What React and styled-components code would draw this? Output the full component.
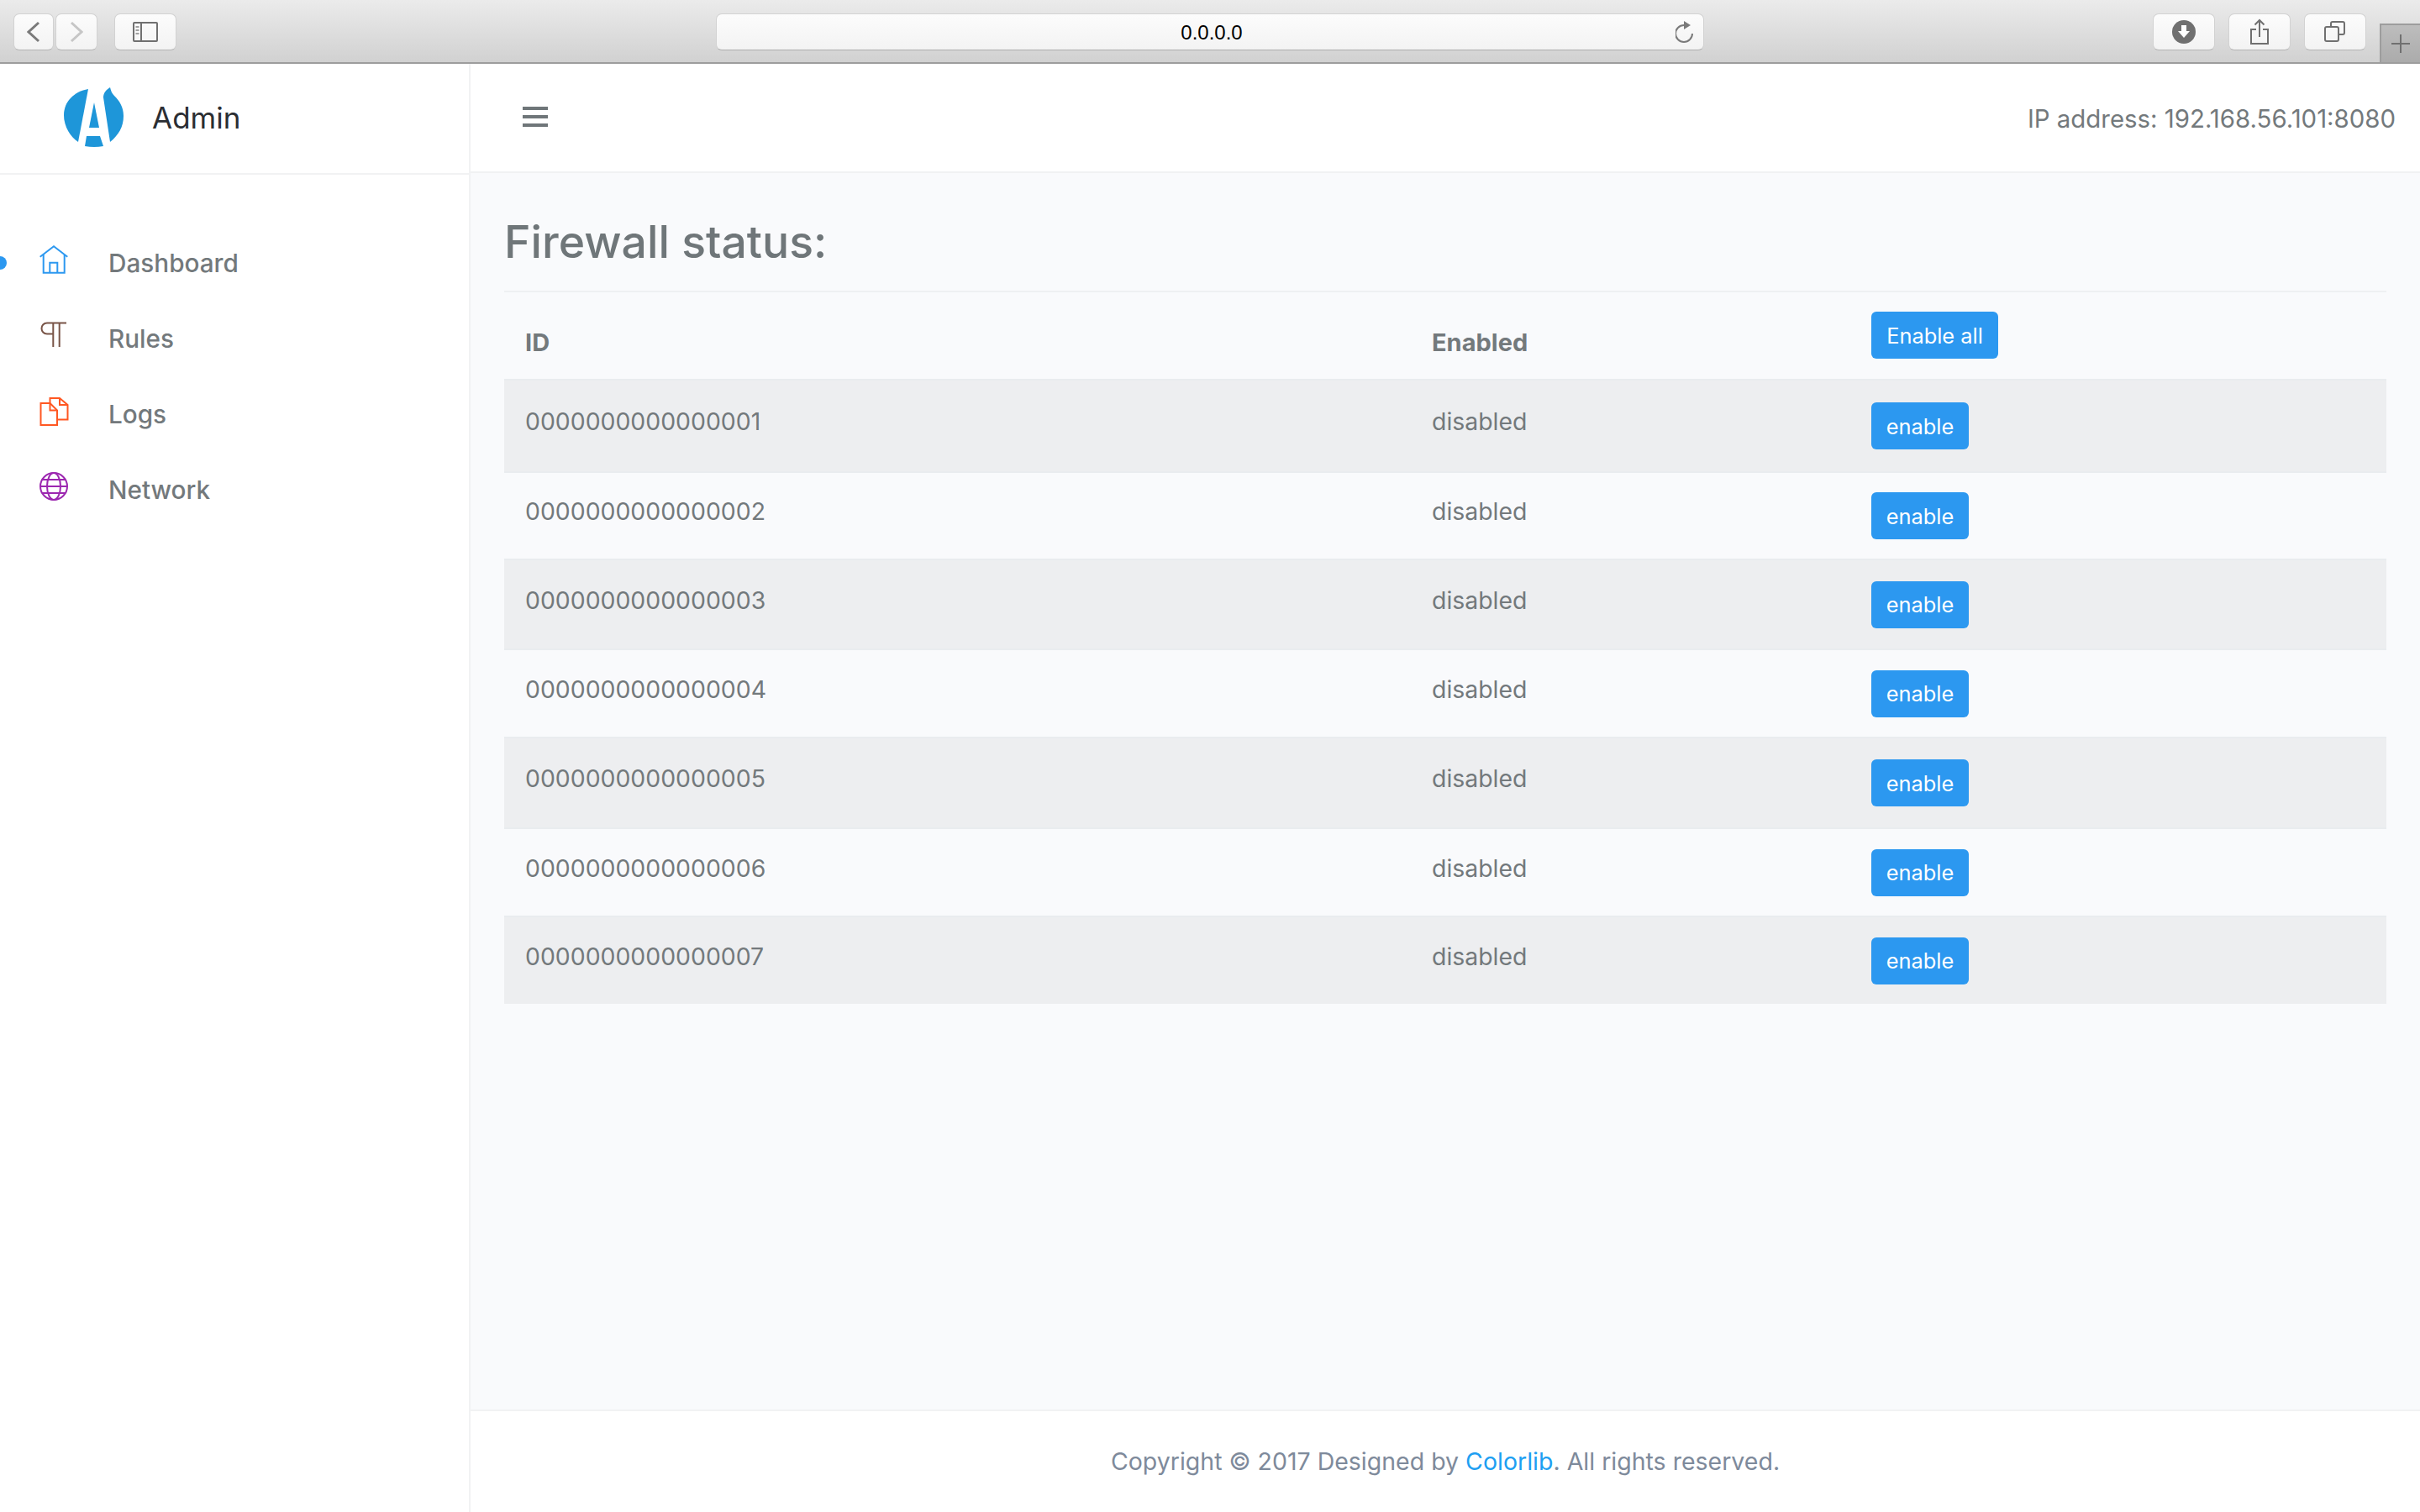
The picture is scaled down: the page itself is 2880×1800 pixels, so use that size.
import React from 'react';
import styled, { createGlobalStyle } from 'styled-components';

const GlobalStyle = createGlobalStyle`
  html, body {
    margin: 0;
    padding: 0;
    background: #fff;
  }
  * {
    box-sizing: border-box;
  }
  body {
    font-family: Inter, "Liberation Sans", sans-serif;
    color: #73797c;
  }
`;

const Page = styled.div`
  width: 2880px;
  height: 1800px;
  display: flex;
  flex-direction: column;
  overflow: hidden;
`;

const Toolbar = styled.div`
  height: 76px;
  flex: none;
  display: flex;
  align-items: flex-start;
  padding: 16px 0 0 16px;
  background: linear-gradient(#ebebeb, #d1d1d1);
  border-bottom: 2px solid #9d9d9d;
`;

const ChromeButton = styled.div`
  width: ${(p) => p.$width || 74}px;
  height: 44px;
  flex: none;
  margin-left: ${(p) => p.$left || 0}px;
  display: flex;
  align-items: center;
  justify-content: center;
  background: linear-gradient(#fcfcfc, #f3f3f3);
  border: 1px solid #d2d2d2;
  border-bottom-color: #b4b4b4;
  border-radius: 7px;
`;

const UrlBar = styled.div`
  width: 1176px;
  height: 44px;
  flex: none;
  margin-left: 642px;
  position: relative;
  display: flex;
  align-items: center;
  justify-content: center;
  background: linear-gradient(#fcfcfc, #f3f3f3);
  border: 1px solid #d2d2d2;
  border-bottom-color: #adadad;
  border-radius: 7px;
  font-family: "Liberation Sans", sans-serif;
  font-size: 24px;
  color: #000;
  padding: 2px 0 0 4px;
`;

const ReloadIcon = styled.svg`
  position: absolute;
  right: 11px;
  top: 7px;
`;

const NewTab = styled.div`
  width: 48px;
  height: 46px;
  flex: none;
  margin: 12px 0 0 16px;
  display: flex;
  align-items: center;
  justify-content: center;
  background: linear-gradient(#bdbdbd, #ababab);
  border-top: 2px solid #9d9d9d;
  border-left: 2px solid #9d9d9d;
`;

const Body = styled.div`
  flex: 1;
  display: flex;
  min-height: 0;
`;

const Sidebar = styled.aside`
  width: 560px;
  flex: none;
  background: #fff;
  border-right: 2px solid #f1f2f3;
`;

const Brand = styled.div`
  height: 132px;
  display: flex;
  align-items: center;
  gap: 33px;
  padding: 0 0 2px 76px;
  border-bottom: 2px solid #f1f2f3;
  font-size: 35px;
  color: #2b2e33;
`;

const Nav = styled.nav`
  padding-top: 60px;
`;

const NavItem = styled.div`
  height: 90px;
  position: relative;
  display: flex;
  align-items: center;
  gap: 47px;
  padding-left: 46px;
  font-size: 29.7px;
  font-weight: 500;
  color: #73797c;
`;

const ActiveDot = styled.span`
  position: absolute;
  left: -8px;
  top: 37px;
  width: 16px;
  height: 16px;
  border-radius: 50%;
  background: #2c98f0;
`;

const NavIcon = styled.svg`
  flex: none;
  margin-bottom: 9px;
`;

const Main = styled.main`
  flex: 1;
  min-width: 0;
  display: flex;
  flex-direction: column;
`;

const TopBar = styled.header`
  height: 130px;
  flex: none;
  display: flex;
  align-items: center;
  justify-content: space-between;
  padding: 0 29px 0 62px;
  background: #fff;
  border-bottom: 2px solid #f1f2f3;
  font-size: 29.4px;
`;

const HostAddress = styled.span`
  padding-top: 3px;
`;

const Content = styled.section`
  flex: 1;
  padding: 0 40px;
  background: #f9fafc;
`;

const Title = styled.h1`
  height: 142px;
  margin: 0;
  padding-top: 47px;
  font-size: 53.5px;
  line-height: 70px;
  font-weight: 500;
  color: #6f7679;
  border-bottom: 2px solid #eef0f2;
`;

const Row = styled.div`
  display: grid;
  grid-template-columns: 1079px 548px 1fr;
  align-items: center;
  height: ${(p) => p.$height}px;
  font-size: 28.4px;
  background: ${(p) => (p.$striped ? '#edeef0' : 'transparent')};
  border-top: 2px solid #e9ecef;
`;

const HeadRow = styled.div`
  display: grid;
  grid-template-columns: 1079px 548px 1fr;
  align-items: start;
  height: 103px;
  padding-top: 23px;
  font-size: 29px;
  font-weight: 700;
`;

const HeadCell = styled.div`
  padding: 15px 0 0 25px;
  line-height: 44px;
`;

const Cell = styled.div`
  padding: 0 0 10px 25px;
  line-height: 44px;
`;

const Button = styled.button`
  justify-self: start;
  width: ${(p) => p.$width}px;
  height: 56px;
  padding: 0;
  border: 0;
  border-radius: 6px;
  background: #2c98f0;
  color: #fff;
  font-family: inherit;
  font-size: 25.4px;
  font-weight: 400;
`;

const Footer = styled.footer`
  height: 122px;
  flex: none;
  display: flex;
  align-items: center;
  justify-content: center;
  padding-bottom: 2px;
  background: #fff;
  border-top: 2px solid #f1f2f3;
  font-size: 28.5px;
  color: #7e8a9b;
`;

const FooterLink = styled.a`
  color: #1e9ff2;
  margin: 0 0 0 8px;
`;

const rowHeights = [110, 104, 107, 105, 108, 105, 105];

const ChromeStroke = ({ width, height, children, color = '#707070', strokeWidth = 2 }) => (
  <svg
    width={width}
    height={height}
    viewBox={`0 0 ${width} ${height}`}
    fill="none"
    stroke={color}
    strokeWidth={strokeWidth}
  >
    {children}
  </svg>
);

function Logo() {
  return (
    <svg width="72" height="74" viewBox="0 0 72 74" fill="#1e96d9" style={{ flex: 'none' }}>
      <path d="M29 3 L17 66 C8 60 0 48 0 34 C0 18 12 6 29 3Z" />
      <path d="M55 1 C50 4 47 8 47 13 L55 66 C65 58 71 48 71 35 C71 24 66 17 60 11 C57 8 56 5 55 1Z" />
      <path d="M36 19 L42 49 L30 49Z" />
      <path d="M27 59 L43 59 L47 71 Q36 73 25 71Z" />
    </svg>
  );
}

const icons = {
  home: (
    <NavIcon width="36" height="36" viewBox="0 0 36 36" fill="none" stroke="#2c98f0" strokeWidth="2">
      <path d="M1.7 14.7 L18 2.3 L34.3 14.7" />
      <path d="M5.7 12 V33.7 H30.7 V12" />
      <path d="M13.3 33.7 V21.7 H22.3 V33.7" />
    </NavIcon>
  ),
  rules: (
    <NavIcon width="36" height="36" viewBox="0 0 36 36" fill="none" stroke="#795548" strokeWidth="2">
      <path d="M33 3.5 H10 C6 3.5 3.5 6.5 3.5 10 C3.5 13.5 6 16.5 10 16.5 H17.3" />
      <path d="M17.3 3.5 V32 M24.7 3.5 V32" />
    </NavIcon>
  ),
  logs: (
    <NavIcon width="36" height="36" viewBox="0 0 36 36" fill="none" stroke="#ff5722" strokeWidth="2">
      <path d="M2.5 9 H13.5 L22 17.5 V35 H2.5Z" />
      <path d="M13.5 9 V17.5 H22" />
      <path d="M13.5 9 V3 H25 L34.5 11 V28.5 H22.5" />
      <path d="M25 3 V11 H34.5" />
    </NavIcon>
  ),
  network: (
    <NavIcon width="36" height="36" viewBox="0 0 36 36" fill="none" stroke="#9c27b0" strokeWidth="2">
      <circle cx="18" cy="18" r="16" />
      <ellipse cx="18" cy="18" rx="8" ry="16" />
      <path d="M4 10 H32 M2 18 H34 M4 26 H32" />
    </NavIcon>
  ),
};

const navItems = [
  { label: 'Dashboard', icon: 'home', active: true },
  { label: 'Rules', icon: 'rules' },
  { label: 'Logs', icon: 'logs' },
  { label: 'Network', icon: 'network' },
];

export default function App() {
  return (
    <Page>
      <GlobalStyle />
      <Toolbar>
        <ChromeButton $width={48}>
          <ChromeStroke width={16} height={26} strokeWidth={3} color="#7a7a7a">
            <path d="M14 2 L2 13 L14 24" />
          </ChromeStroke>
        </ChromeButton>
        <ChromeButton $width={50} $left={2}>
          <ChromeStroke width={16} height={26} strokeWidth={3} color="#c6c6c6">
            <path d="M2 2 L14 13 L2 24" />
          </ChromeStroke>
        </ChromeButton>
        <ChromeButton $left={20}>
          <ChromeStroke width={30} height={24}>
            <rect x="1" y="1" width="28" height="22" rx="1" />
            <path d="M10 1 V23" />
            <path d="M3.5 6 H7.5 M3.5 10 H7.5 M3.5 14 H7.5" stroke="#a0a0a0" />
          </ChromeStroke>
        </ChromeButton>
        <UrlBar>
          0.0.0.0
          <ReloadIcon width="22" height="28" viewBox="0 0 22 28" fill="none" stroke="#7a7a7a" strokeWidth="2">
            <path d="M10 6 A10 10 0 1 0 20 16" />
            <path d="M10 1 L18 6 L10 11Z" fill="#7a7a7a" stroke="none" />
          </ReloadIcon>
        </UrlBar>
        <ChromeButton $left={534}>
          <svg width="28" height="28" viewBox="0 0 28 28">
            <circle cx="14" cy="14" r="14" fill="#707070" />
            <path d="M11 6 H17 V13 H21 L14 21 L7 13 H11Z" fill="#fff" />
          </svg>
        </ChromeButton>
        <ChromeButton $left={16}>
          <ChromeStroke width={24} height={32}>
            <path d="M8 13 H2 V30 H22 V13 H16" />
            <path d="M12 22 V2 M6.5 7.5 L12 2 L17.5 7.5" />
          </ChromeStroke>
        </ChromeButton>
        <ChromeButton $left={16}>
          <ChromeStroke width={26} height={26}>
            <rect x="1" y="7" width="16" height="17" rx="2" />
            <path d="M8 7 V3 Q8 1 10 1 H22 Q24 1 24 3 V14 Q24 16 22 16 H17" />
          </ChromeStroke>
        </ChromeButton>
        <NewTab>
          <ChromeStroke width={22} height={22}>
            <path d="M11 0 V22 M0 11 H22" />
          </ChromeStroke>
        </NewTab>
      </Toolbar>
      <Body>
        <Sidebar>
          <Brand>
            <Logo />
            <span>Admin</span>
          </Brand>
          <Nav>
            {navItems.map((item) => (
              <NavItem key={item.label}>
                {item.active && <ActiveDot />}
                {icons[item.icon]}
                <span>{item.label}</span>
              </NavItem>
            ))}
          </Nav>
        </Sidebar>
        <Main>
          <TopBar>
            <svg width="30" height="26" viewBox="0 0 30 26" fill="#6f7679">
              <rect y="0" width="30" height="4" />
              <rect y="10" width="30" height="4" />
              <rect y="20" width="30" height="4" />
            </svg>
            <HostAddress>IP address: 192.168.56.101:8080</HostAddress>
          </TopBar>
          <Content>
            <Title>Firewall status:</Title>
            <HeadRow>
              <HeadCell>ID</HeadCell>
              <HeadCell>Enabled</HeadCell>
              <Button $width={151}>Enable all</Button>
            </HeadRow>
            {rowHeights.map((height, i) => (
              <Row key={i} $height={height} $striped={i % 2 === 0}>
                <Cell>{`000000000000000${i + 1}`}</Cell>
                <Cell>disabled</Cell>
                <Button $width={116}>enable</Button>
              </Row>
            ))}
          </Content>
          <Footer>
            Copyright © 2017 Designed by<FooterLink>Colorlib</FooterLink>. All rights reserved.
          </Footer>
        </Main>
      </Body>
    </Page>
  );
}
